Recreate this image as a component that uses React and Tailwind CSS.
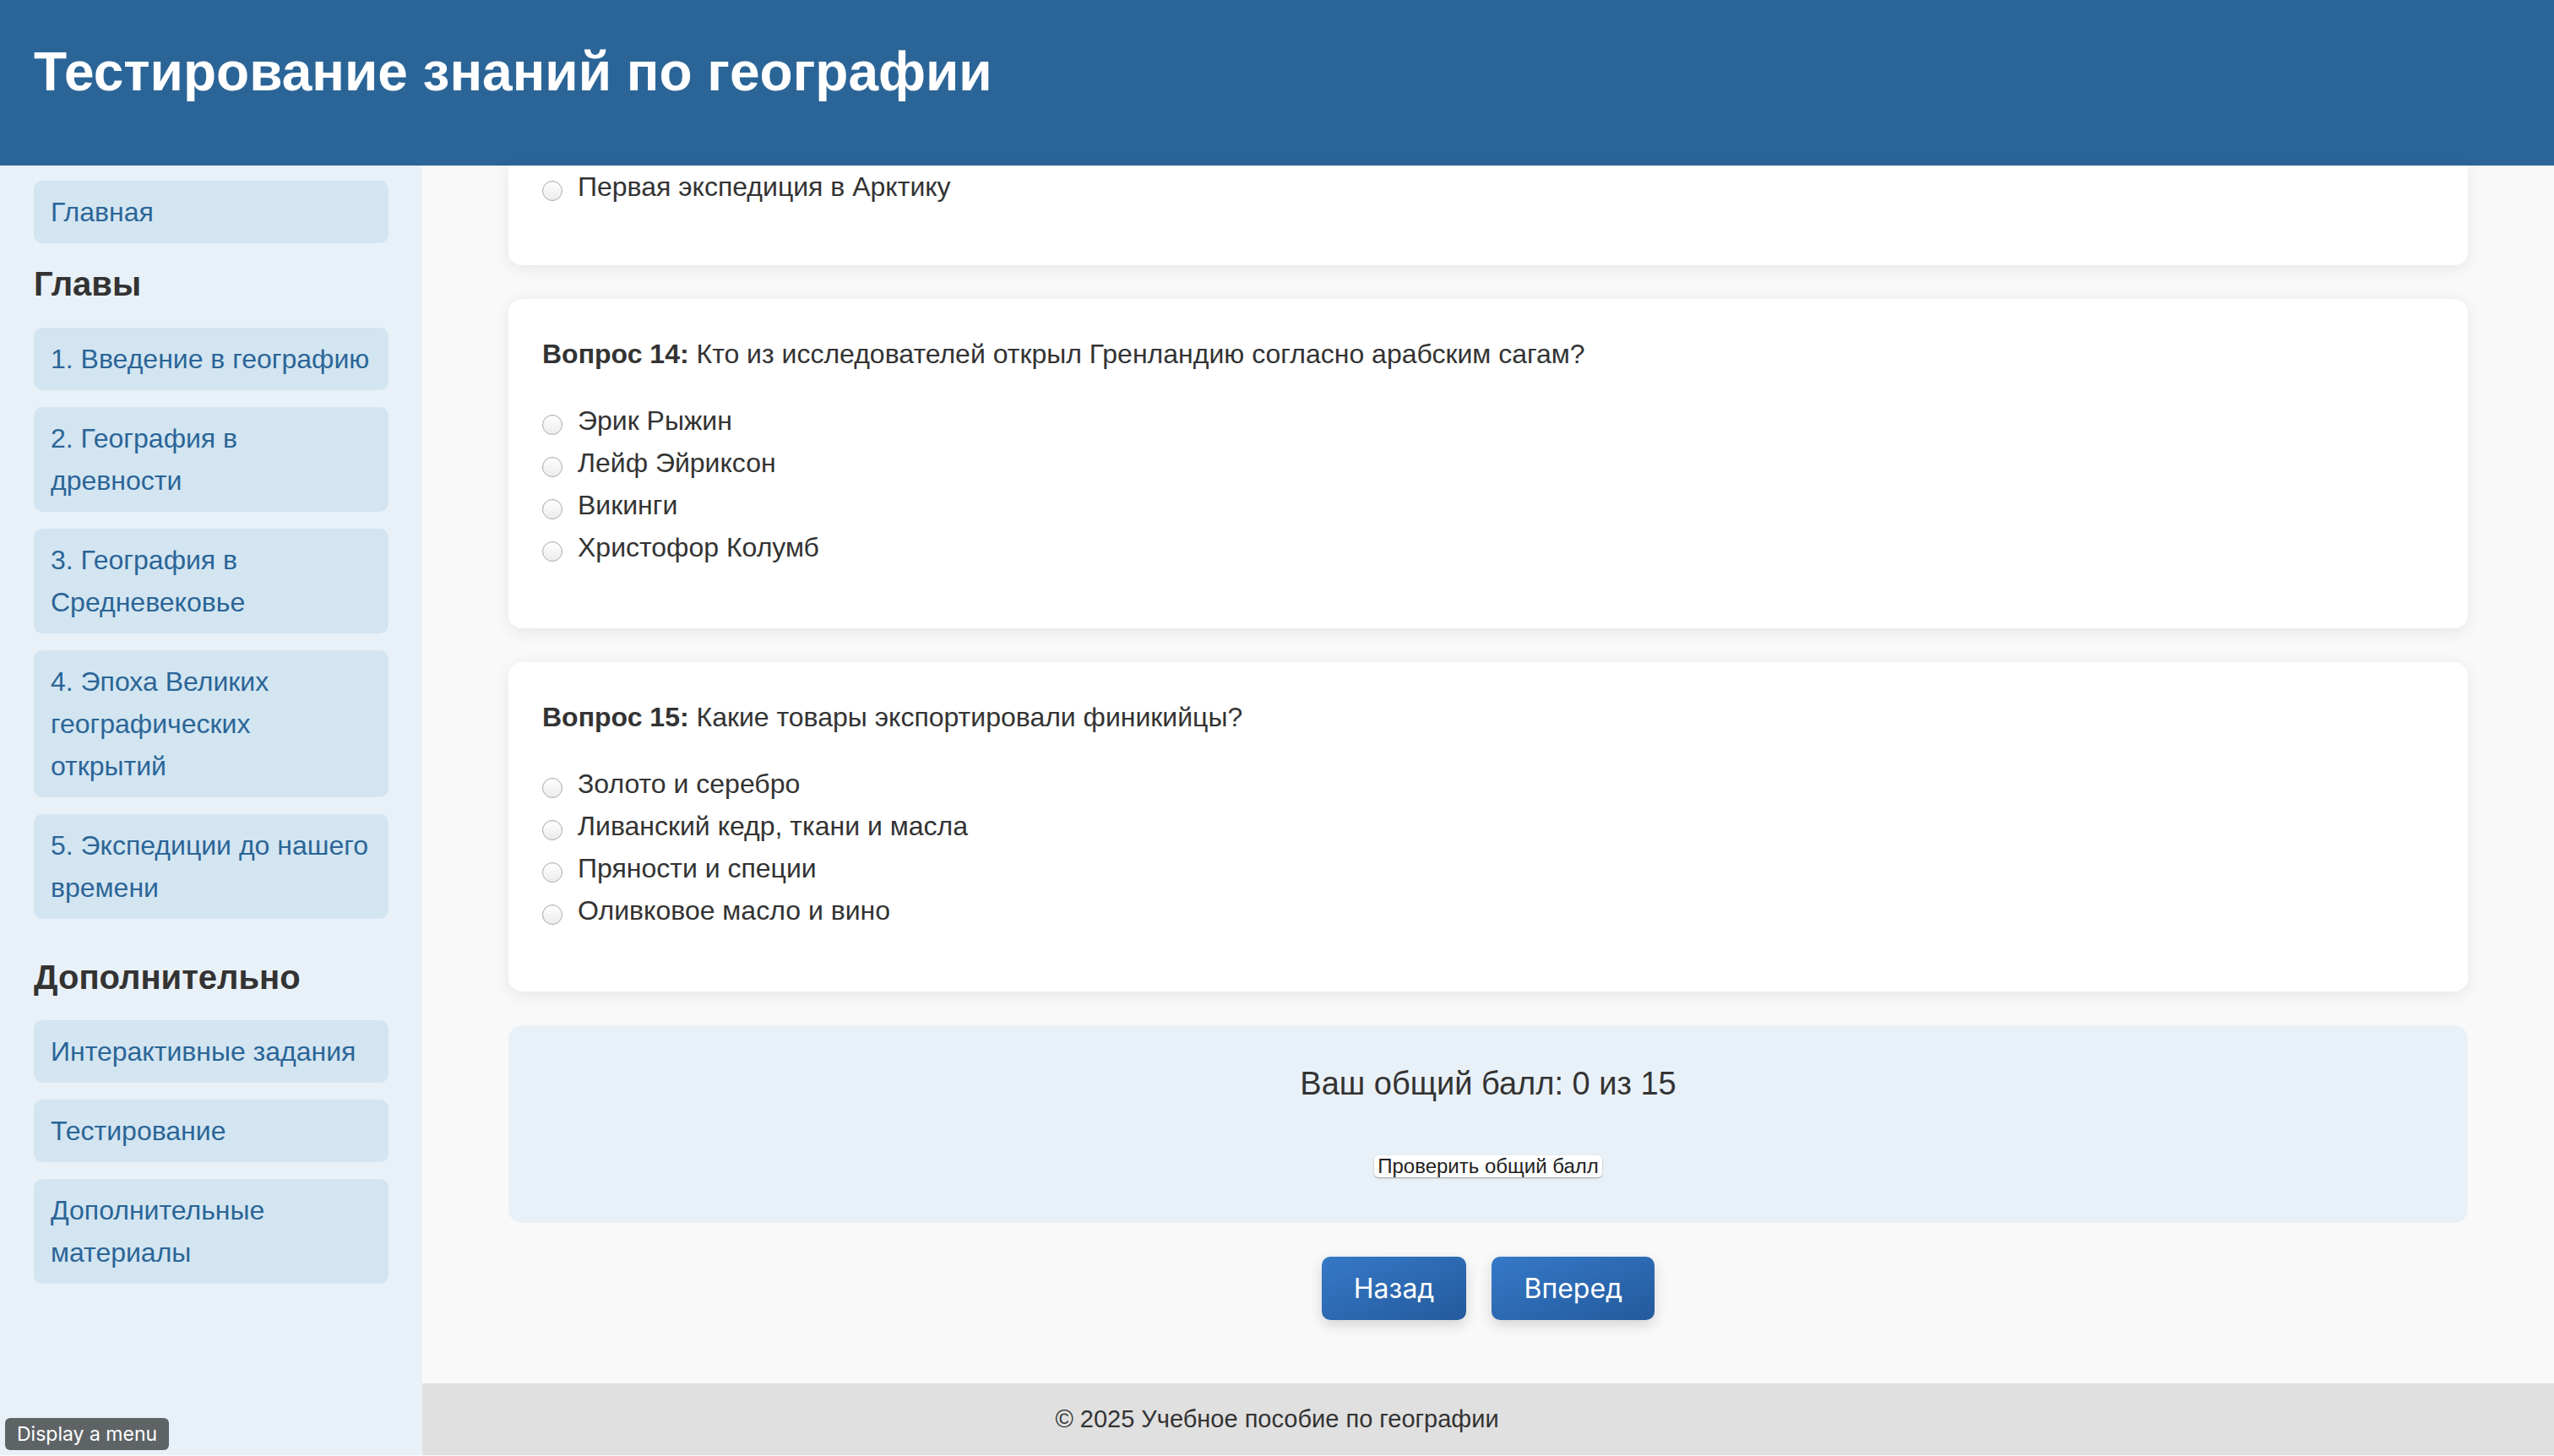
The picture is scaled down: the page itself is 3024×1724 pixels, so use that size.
import React from 'react';

const chapters = [
    '1. Введение в географию',
    '2. География в древности',
    '3. География в Средневековье',
    '4. Эпоха Великих географических открытий',
    '5. Экспедиции до нашего времени',
];

const extras = ['Интерактивные задания', 'Тестирование', 'Дополнительные материалы'];

const questions = [
    {
        num: 14,
        text: 'Кто из исследователей открыл Гренландию согласно арабским сагам?',
        options: ['Эрик Рыжин', 'Лейф Эйриксон', 'Викинги', 'Христофор Колумб'],
    },
    {
        num: 15,
        text: 'Какие товары экспортировали финикийцы?',
        options: ['Золото и серебро', 'Ливанский кедр, ткани и масла', 'Пряности и специи', 'Оливковое масло и вино'],
    },
];

function NavItem({ children }) {
    return (
        <a className="block rounded-[10px] bg-[#d3e5f1] px-[20px] py-[12px] text-[32px] leading-[50px] text-[#2b6597]">
            {children}
        </a>
    );
}

function Radio() {
    return (
        <span className="mt-[18px] h-[24px] w-[24px] shrink-0 rounded-full border border-[#ababab] bg-linear-to-b from-white to-[#ececec] shadow-[inset_0_1px_1px_rgba(0,0,0,0.05)]"></span>
    );
}

function Option({ label }) {
    return (
        <label className="flex h-[50px] items-start gap-[18px] text-[32px] leading-[50px] text-[#333]">
            <Radio />
            <span>{label}</span>
        </label>
    );
}

function QuestionCard({ q }) {
    return (
        <div className="rounded-[16px] bg-white p-[40px] shadow-[0_4px_20px_rgba(0,0,0,0.08)]">
            <p className="mb-[28px] text-[32px] leading-[51px] text-[#333]">
                <strong className="font-bold">Вопрос {q.num}:</strong> {q.text}
            </p>
            <div className="mb-[31px]">
                {q.options.map((o) => (
                    <Option key={o} label={o} />
                ))}
            </div>
        </div>
    );
}

export default function App() {
    return (
        <div className="min-h-[1724px] bg-[#f9f9f9] font-['Liberation_Sans',Arial,sans-serif] text-[#333]">
            {/* Header */}
            <header className="h-[196px] bg-[#2b6597] px-[40px] pt-[48px]">
                <h1 className="text-[64px] font-bold leading-[74px] text-white">Тестирование знаний по географии</h1>
            </header>

            <div className="flex">
                {/* Sidebar */}
                <aside className="w-[500px] shrink-0 bg-[#e9f1f8] px-[40px] pt-[18px]">
                    <NavItem>Главная</NavItem>
                    <h3 className="mt-[24px] mb-[28px] text-[40px] font-bold leading-[48px] text-[#333]">Главы</h3>
                    <div className="flex flex-col gap-[20px]">
                        {chapters.map((c) => (
                            <NavItem key={c}>{c}</NavItem>
                        ))}
                    </div>
                    <h3 className="mt-[45px] mb-[27px] text-[40px] font-bold leading-[48px] text-[#333]">Дополнительно</h3>
                    <div className="flex flex-col gap-[20px]">
                        {extras.map((e) => (
                            <NavItem key={e}>{e}</NavItem>
                        ))}
                    </div>
                </aside>

                {/* Main */}
                <main className="flex min-w-0 flex-1 flex-col">
                    <div className="mx-auto flex w-[2320px] flex-col gap-[40px]">
                        {/* partially scrolled card */}
                        <div className="h-[118px] rounded-b-[16px] bg-white px-[40px] shadow-[0_4px_20px_rgba(0,0,0,0.08)]">
                            <Option label="Первая экспедиция в Арктику" />
                        </div>

                        {questions.map((q) => (
                            <QuestionCard key={q.num} q={q} />
                        ))}

                        <div className="flex flex-col items-center rounded-[16px] bg-[#e9f1f8] pt-[40px] pb-[54px]">
                            <h3 className="mb-[56px] text-[38px] leading-[58px] text-[#333]">Ваш общий балл: 0 из 15</h3>
                            <button className="h-[26px] rounded-[5px] bg-white px-[4px] text-[24px] leading-[26px] text-[#222] shadow-[0_1px_2px_rgba(0,0,0,0.35)]">
                                Проверить общий балл
                            </button>
                        </div>

                        <div className="flex justify-center gap-[30px]">
                            <button className="rounded-[10px] bg-linear-to-br from-[#3679c8] to-[#245a9c] px-[38px] py-[12px] font-['Inter',sans-serif] text-[32px] leading-[51px] text-white shadow-[0_6px_16px_rgba(0,0,0,0.15)]">
                                Назад
                            </button>
                            <button className="rounded-[10px] bg-linear-to-br from-[#3679c8] to-[#245a9c] px-[38px] py-[12px] font-['Inter',sans-serif] text-[32px] leading-[51px] text-white shadow-[0_6px_16px_rgba(0,0,0,0.15)]">
                                Вперед
                            </button>
                        </div>
                    </div>

                    <footer className="mt-[75px] bg-[#e0e0e0] pr-[500px] py-[20px] text-center text-[29px] leading-[45px] text-[#333]">
                        © 2025 Учебное пособие по географии
                    </footer>
                </main>
            </div>

            <div className="fixed bottom-[7px] left-[6px] rounded-[6px] bg-[#5e6366] px-[14px] py-[4px] font-['Inter',sans-serif] text-[23px] leading-[30px] text-white">
                Display a menu
            </div>
        </div>
    );
}
